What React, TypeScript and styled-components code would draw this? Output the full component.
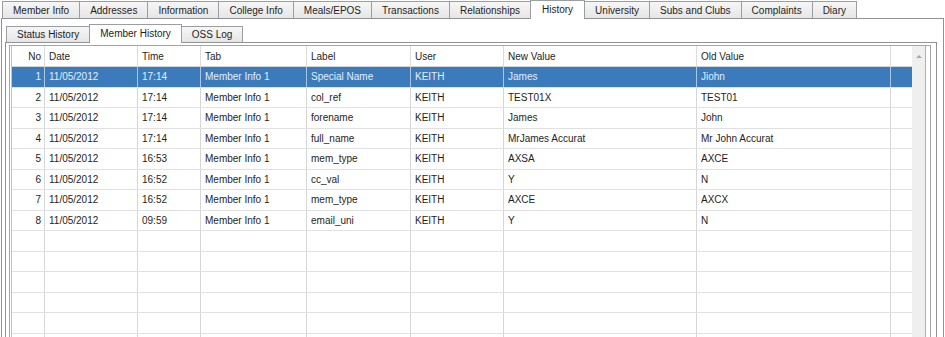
import React from "react";
import styled, { createGlobalStyle, css } from "styled-components";

const Global = createGlobalStyle`
  html, body { margin: 0; padding: 0; background: #ffffff; overflow: hidden; }
  body { font-family: "Liberation Sans", Arial, sans-serif; font-size: 10px; color: #1e1e1e; }
`;

const Page = styled.div`
  width: 945px;
  height: 337px;
  overflow: hidden;
  padding-left: 1px;
  box-sizing: border-box;
`;

const TabStrip = styled.div<{ $inner?: boolean }>`
  display: flex;
  align-items: flex-end;
  height: 18px;
  padding-left: 1px;
  position: relative;
  z-index: 2;
`;

const Tab = styled.div<{ $selected?: boolean; $inner?: boolean }>`
  box-sizing: border-box;
  height: ${(p) => (p.$inner ? "16px" : "17px")};
  padding: 0 10px;
  display: flex;
  align-items: center;
  white-space: nowrap;
  border: 1px solid #9a9ea3;
  border-bottom: none;
  margin-right: -1px;
  background: linear-gradient(#f6f6f6, #e6e6e6);
  color: #1e1e1e;
  ${(p) =>
    p.$selected &&
    css`
      height: 19px;
      margin-bottom: -1px;
      padding-bottom: 2px;
      padding-left: ${p.$inner ? "10px" : "11px"};
      padding-right: ${p.$inner ? "10px" : "11px"};
      background: #ffffff;
      position: relative;
      z-index: 3;
    `}
`;

const OuterPanel = styled.div`
  box-sizing: border-box;
  width: 943px;
  height: 340px;
  border: 1px solid #8f9398;
  background: #ffffff;
  padding: 5px 6px 0 3px;
`;

const InnerPanel = styled.div`
  box-sizing: border-box;
  width: 932px;
  height: 320px;
  border: 1px solid #8f9398;
  padding: 2px 5px 0 3px;
  background: #ffffff;
`;

const GridFrame = styled.div`
  box-sizing: border-box;
  height: 320px;
  border: 1px solid #a3a5a8;
  border-bottom: none;
  padding: 0 4px 0 1px;
  display: flex;
`;

const GridInner = styled.div`
  display: flex;
  border-left: 1px solid #c4c4c4;
  border-right: 1px solid #b0b0b0;
  flex: 1;
`;

const GridBody = styled.div`
  width: 900px;
  display: flex;
  flex-direction: column;
`;

const columns = "33px 93px 63px 106px 104px 93px 193px 194px 21px";

const HeaderRow = styled.div`
  display: grid;
  grid-template-columns: ${columns};
  height: 21px;
  box-sizing: border-box;
  border-bottom: 1px solid #d5d5d5;
  background: #ffffff;
`;

const HeaderCell = styled.div<{ $right?: boolean; $last?: boolean }>`
  display: flex;
  align-items: center;
  justify-content: ${(p) => (p.$right ? "flex-end" : "flex-start")};
  padding: 0 3px 0 4px;
  border-right: ${(p) => (p.$last ? "none" : "1px solid #dcdcdc")};
  white-space: nowrap;
  overflow: hidden;
`;

const Row = styled.div<{ $selected?: boolean }>`
  display: grid;
  grid-template-columns: ${columns};
  height: 20.5px;
  box-sizing: border-box;
  border-bottom: 1px solid #e1e1e1;
  background: ${(p) => (p.$selected ? "#3c7bbb" : "#ffffff")};
  color: ${(p) => (p.$selected ? "#e4eef9" : "#1e1e1e")};
  flex: 0 0 auto;
`;

const Cell = styled.div<{ $right?: boolean; $last?: boolean; $selected?: boolean }>`
  display: flex;
  align-items: center;
  justify-content: ${(p) => (p.$right ? "flex-end" : "flex-start")};
  padding: 0 3px 0 4px;
  border-right: ${(p) =>
    p.$last ? "none" : p.$selected ? "1px solid #a9c6e4" : "1px solid #d6d6d6"};
  white-space: nowrap;
  overflow: hidden;
`;

const Scrollbar = styled.div`
  width: 13px;
  background: #efefef;
  display: flex;
  flex-direction: column;
  align-items: center;
  padding-top: 9px;
  box-sizing: border-box;
`;

const ArrowUp = styled.div`
  width: 0;
  height: 0;
  border-left: 3px solid transparent;
  border-right: 3px solid transparent;
  border-bottom: 3px solid #a8a8a8;
`;

const outerTabs = [
  "Member Info",
  "Addresses",
  "Information",
  "College Info",
  "Meals/EPOS",
  "Transactions",
  "Relationships",
  "History",
  "University",
  "Subs and Clubs",
  "Complaints",
  "Diary",
];

const innerTabs = ["Status History", "Member History", "OSS Log"];

const headers = ["No", "Date", "Time", "Tab", "Label", "User", "New Value", "Old Value", ""];

const rows: string[][] = [
  ["1", "11/05/2012", "17:14", "Member Info 1", "Special Name", "KEITH", "James", "Jiohn"],
  ["2", "11/05/2012", "17:14", "Member Info 1", "col_ref", "KEITH", "TEST01X", "TEST01"],
  ["3", "11/05/2012", "17:14", "Member Info 1", "forename", "KEITH", "James", "John"],
  ["4", "11/05/2012", "17:14", "Member Info 1", "full_name", "KEITH", "MrJames Accurat", "Mr John Accurat"],
  ["5", "11/05/2012", "16:53", "Member Info 1", "mem_type", "KEITH", "AXSA", "AXCE"],
  ["6", "11/05/2012", "16:52", "Member Info 1", "cc_val", "KEITH", "Y", "N"],
  ["7", "11/05/2012", "16:52", "Member Info 1", "mem_type", "KEITH", "AXCE", "AXCX"],
  ["8", "11/05/2012", "09:59", "Member Info 1", "email_uni", "KEITH", "Y", "N"],
];

const blankRows = 6;

export default function App() {
  const allRows = [...rows, ...Array.from({ length: blankRows }, () => ["", "", "", "", "", "", "", ""])];
  return (
    <Page>
      <Global />
      <TabStrip>
        {outerTabs.map((t) => (
          <Tab key={t} $selected={t === "History"}>
            {t}
          </Tab>
        ))}
      </TabStrip>
      <OuterPanel>
        <TabStrip $inner>
          {innerTabs.map((t) => (
            <Tab key={t} $inner $selected={t === "Member History"}>
              {t}
            </Tab>
          ))}
        </TabStrip>
        <InnerPanel>
          <GridFrame>
            <GridInner>
              <GridBody>
                <HeaderRow>
                  {headers.map((h, i) => (
                    <HeaderCell key={i} $right={i === 0} $last={i === headers.length - 1}>
                      {h}
                    </HeaderCell>
                  ))}
                </HeaderRow>
                {allRows.map((r, ri) => {
                  const sel = ri === 0;
                  return (
                    <Row key={ri} $selected={sel}>
                      {[...r, ""].map((c, ci) => (
                        <Cell key={ci} $right={ci === 0} $last={ci === 8} $selected={sel}>
                          {c}
                        </Cell>
                      ))}
                    </Row>
                  );
                })}
              </GridBody>
              <Scrollbar>
                <ArrowUp />
              </Scrollbar>
            </GridInner>
          </GridFrame>
        </InnerPanel>
      </OuterPanel>
    </Page>
  );
}
